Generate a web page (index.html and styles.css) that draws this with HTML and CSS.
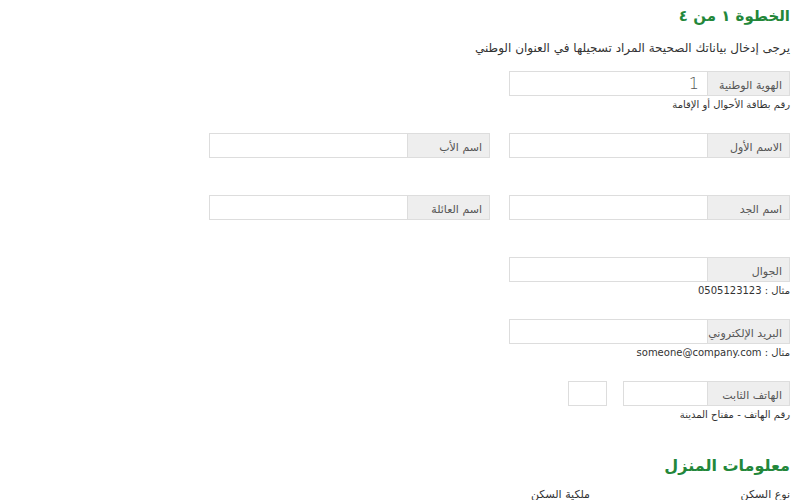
FILE: index.html
```html
<!DOCTYPE html>
<html lang="ar" dir="rtl">
<head>
    <meta charset="UTF-8">
    <title>العنوان الوطني - التسجيل</title>
    <link rel="stylesheet" href="styles.css">
</head>
<body>
    <div class="page">
        <h2 class="step-title">الخطوة ١ من ٤</h2>
        <p class="intro">يرجى إدخال بياناتك الصحيحة المراد تسجيلها في العنوان الوطني</p>

        <div class="row">
            <div class="field">
                <div class="group">
                    <span class="addon">الهوية الوطنية</span>
                    <input type="text" value="1">
                </div>
                <div class="hint">رقم بطاقة الأحوال أو الإقامة</div>
            </div>
        </div>

        <div class="row">
            <div class="field">
                <div class="group">
                    <span class="addon">الاسم الأول</span>
                    <input type="text">
                </div>
            </div>
            <div class="field">
                <div class="group">
                    <span class="addon">اسم الأب</span>
                    <input type="text">
                </div>
            </div>
        </div>

        <div class="row">
            <div class="field">
                <div class="group">
                    <span class="addon">اسم الجد</span>
                    <input type="text">
                </div>
            </div>
            <div class="field">
                <div class="group">
                    <span class="addon">اسم العائلة</span>
                    <input type="text">
                </div>
            </div>
        </div>

        <div class="row">
            <div class="field">
                <div class="group">
                    <span class="addon">الجوال</span>
                    <input type="text">
                </div>
                <div class="hint">مثال : 0505123123</div>
            </div>
        </div>

        <div class="row">
            <div class="field">
                <div class="group">
                    <span class="addon">البريد الإلكتروني</span>
                    <input type="text">
                </div>
                <div class="hint">مثال : someone@company.com</div>
            </div>
        </div>

        <div class="row">
            <div class="field">
                <div class="phone">
                    <div class="group group-short">
                        <span class="addon">الهاتف الثابت</span>
                        <input type="text">
                    </div>
                    <input type="text" class="area-code">
                </div>
                <div class="hint">رقم الهاتف - مفتاح المدينة</div>
            </div>
        </div>

        <h2 class="section-title">معلومات المنزل</h2>

        <div class="house-row">
            <label class="house-label">نوع السكن</label>
            <label class="house-label">ملكية السكن</label>
        </div>
    </div>
</body>
</html>
```

FILE: styles.css
```css
body {
    margin: 0;
    background-color: #fff;
    color: #333;
    font-family: "DejaVu Sans", Tahoma, sans-serif;
    font-size: 12px;
}

.page {
    width: 582px;
    margin-right: 10px;
    padding-top: 4px;
}

.step-title {
    margin: 0;
    font-size: 15px;
    line-height: 24px;
    color: #23873a;
}

.intro {
    margin: 10px 0 13px;
    line-height: 20px;
    font-size: 12px;
    color: #333;
}

.row {
    display: flex;
    gap: 19px;
    min-height: 44px;
    margin-bottom: 18px;
}

.field {
    width: 281px;
}

.group {
    display: flex;
    height: 25px;
    border: 1px solid #ddd;
    box-sizing: border-box;
}

.addon {
    width: 82px;
    flex-shrink: 0;
    box-sizing: border-box;
    padding: 5px 7px 0 0;
    background-color: #eee;
    border-left: 1px solid #ddd;
    color: #555;
    font-size: 11px;
    line-height: 18px;
    white-space: nowrap;
    overflow: hidden;
}

.group input {
    flex: 1;
    min-width: 0;
    border: none;
    outline: none;
    padding: 0 8px;
    font-family: "DejaVu Sans", sans-serif;
    font-size: 16px;
    font-weight: 300;
    color: #555;
    background: #fff;
}

.hint {
    margin-top: 2px;
    font-size: 10px;
    line-height: 14px;
    color: #333;
}

.phone {
    display: flex;
    gap: 16px;
}

.group-short {
    width: 167px;
}

.area-code {
    width: 39px;
    height: 25px;
    box-sizing: border-box;
    border: 1px solid #ddd;
    outline: none;
}

.section-title {
    margin: 27px 0 0;
    font-size: 16px;
    line-height: 28px;
    color: #23873a;
}

.house-row {
    display: flex;
    margin-top: 8px;
}

.house-label {
    width: 200px;
    font-size: 11px;
    color: #333;
}
```
